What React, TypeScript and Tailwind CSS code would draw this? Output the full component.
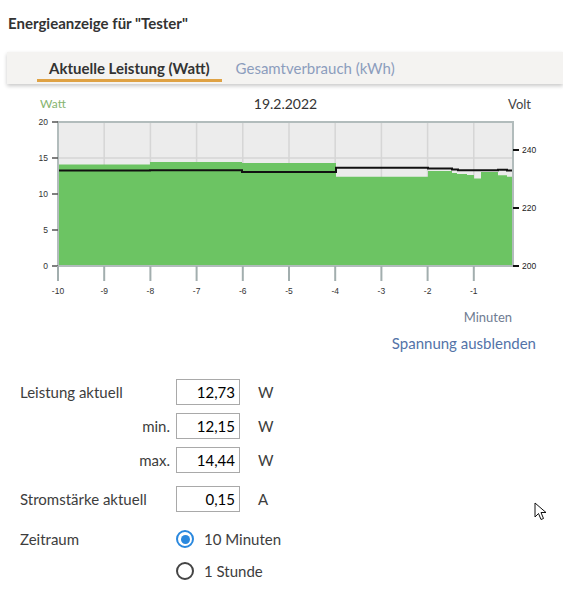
import React from 'react';

const FONT = "font-['Lato','Open_Sans',sans-serif]";

// minute ticks on the x axis, -10 .. -1
const minutes = [-10, -9, -8, -7, -6, -5, -4, -3, -2, -1];
const xOf = (m: number) => 58 + (m + 10) * 46.2;
const wattY = (w: number) => 265 - w * 7.2;
const voltY = (v: number) => 265 - (v - 200) * 2.9;

// power samples as [x, watt] steps
const power: [number, number][] = [
    [58, 14.1],
    [150, 14.44],
    [242, 14.3],
    [336, 12.4],
    [428, 13.2],
    [452, 12.9],
    [457, 12.78],
    [467, 12.65],
    [474, 12.15],
    [481, 13.06],
    [498, 12.6],
    [507, 12.4],
];

const voltage: [number, number][] = [
    [58, 232.9],
    [150, 233.0],
    [242, 232.4],
    [336, 233.9],
    [428, 233.6],
    [452, 233.3],
    [458, 233.0],
    [498, 233.2],
    [507, 232.9],
];

const stepPath = (pts: [number, number][], yOf: (v: number) => number, end: number) => {
    let d = '';
    pts.forEach(([x, v], i) => {
        const y = yOf(v).toFixed(1);
        d += i === 0 ? `M${x},${y}` : ` L${x},${yOf(pts[i - 1][1]).toFixed(1)} L${x},${y}`;
    });
    d += ` L${end},${yOf(pts[pts.length - 1][1]).toFixed(1)}`;
    return d;
};

const Chart = () => {
    const area = `${stepPath(power, wattY, 513)} L513,265 L58,265 Z`;
    const line = `${stepPath(voltage, voltY, 513)} L513,163`;
    return (
        <svg width={563} height={190} viewBox="0 112 563 190" className="block">
            <rect x={58} y={121} width={455} height={144} fill="#ececec" />
            {minutes.slice(1).map((m) => (
                <line key={m} x1={xOf(m)} y1={121} x2={xOf(m)} y2={265} stroke="#d6d6d6" strokeWidth={1.5} />
            ))}
            {[15, 10, 5].map((w) => (
                <line key={w} x1={58} y1={wattY(w)} x2={513} y2={wattY(w)} stroke="#d6d6d6" strokeWidth={1.5} />
            ))}
            <path d={area} fill="#6cc463" />
            <path d={line} fill="none" stroke="#111" strokeWidth={2} />
            <rect x={58} y={121} width={455} height={144} fill="none" stroke="#b2bcbc" strokeWidth={2} />

            {/* left axis: watt */}
            {[20, 15, 10, 5, 0].map((w) => (
                <g key={w}>
                    <line x1={52} y1={wattY(w)} x2={58} y2={wattY(w)} stroke="#555" strokeWidth={1.5} />
                    <text x={48} y={wattY(w) + 3} textAnchor="end" fontSize={8.5} fill="#333" fontFamily="Liberation Sans, sans-serif">
                        {w}
                    </text>
                </g>
            ))}

            {/* right axis: volt */}
            {[240, 220, 200].map((v) => (
                <g key={v}>
                    <line x1={513} y1={voltY(v)} x2={519} y2={voltY(v)} stroke="#111" strokeWidth={2} />
                    <text x={522} y={voltY(v) + 3} fontSize={8.5} fill="#222" fontFamily="Liberation Sans, sans-serif">
                        {v}
                    </text>
                </g>
            ))}

            {/* bottom axis: minutes */}
            {minutes.map((m) => (
                <g key={m}>
                    <line x1={xOf(m)} y1={265} x2={xOf(m)} y2={280} stroke="#a2aeae" strokeWidth={2} />
                    <text x={xOf(m)} y={293} textAnchor="middle" fontSize={8.5} fill="#333" fontFamily="Liberation Sans, sans-serif">
                        {m}
                    </text>
                </g>
            ))}
        </svg>
    );
};

const ValueBox = ({ value }: { value: string }) => (
    <div className="flex h-[26px] w-[64px] items-center justify-end border border-[#a9a9a9] bg-white pr-[4px] text-[15px] text-black">
        {value}
    </div>
);

const Radio = ({ checked, label }: { checked: boolean; label: string }) => (
    <div className="flex h-[26px] items-center gap-[10px]">
        {checked ? (
            <span className="grid h-[18px] w-[18px] place-items-center rounded-full border-2 border-[#2a88de]">
                <span className="h-[9px] w-[9px] rounded-full bg-[#2a88de]" />
            </span>
        ) : (
            <span className="h-[18px] w-[18px] rounded-full border-2 border-[#444]" />
        )}
        <span>{label}</span>
    </div>
);

const App = () => {
    return (
        <div className={`relative h-[595px] w-[563px] overflow-hidden bg-white text-[#3d3d3d] ${FONT}`}>
            <h1 className="pl-[8px] pt-[13px] text-[15px] font-bold leading-[20px] text-[#333]">Energieanzeige für "Tester"</h1>

            <div className="ml-[7px] mt-[19px] flex h-[32px] items-stretch bg-[#f4f3f1] pl-[30px] text-[15px] shadow-[0_2px_4px_rgba(0,0,0,0.22)]">
                <div className="relative flex items-center px-[12px] font-bold text-[#333]">
                    Aktuelle Leistung (Watt)
                    <span className="absolute bottom-[2px] left-0 right-0 h-[3px] bg-[#dfa244]" />
                </div>
                <div className="flex items-center pl-[14px] text-[#8c9dbd]">Gesamtverbrauch (kWh)</div>
            </div>

            <div className="mt-[11px] grid grid-cols-[1fr_auto_1fr] items-center text-[14px] leading-[18px]">
                <span className="pl-[40px] text-[12px] text-[#86b470]">Watt</span>
                <span className="pl-[8px] text-[#333]">19.2.2022</span>
                <span className="pr-[32px] text-right text-[13px] text-[#444]">Volt</span>
            </div>

            <Chart />

            <div className="mt-[6px] flex justify-end pr-[51px] text-[13px] leading-[16px] text-[#6f7c92]">Minuten</div>
            <div className="mt-[8px] flex justify-end pr-[27px] text-[15px] leading-[20px] text-[#5373a8]">Spannung ausblenden</div>

            <div className="mt-[26px] grid grid-cols-[150px_64px_auto] items-center gap-x-[6px] gap-y-[8px] pl-[20px] text-[15px]">
                <span>Leistung aktuell</span>
                <ValueBox value="12,73" />
                <span className="pl-[12px]">W</span>

                <span className="text-right">min.</span>
                <ValueBox value="12,15" />
                <span className="pl-[12px]">W</span>

                <span className="text-right">max.</span>
                <ValueBox value="14,44" />
                <span className="pl-[12px]">W</span>

                <span className="mt-[5px]">Stromstärke aktuell</span>
                <div className="mt-[5px]">
                    <ValueBox value="0,15" />
                </div>
                <span className="mt-[5px] pl-[12px]">A</span>

                <span className="mt-[6px] self-start leading-[26px]">Zeitraum</span>
                <div className="col-span-2 mt-[6px] flex flex-col gap-[6px]">
                    <Radio checked label="10 Minuten" />
                    <Radio checked={false} label="1 Stunde" />
                </div>
            </div>

            {/* mouse pointer */}
            <svg className="absolute left-[534px] top-[502px]" width={14} height={20} viewBox="0 0 14 20">
                <path d="M1,1 L1,15 L4.5,11.5 L7,17.5 L9.5,16.5 L7,10.5 L12,10.5 Z" fill="#fff" stroke="#111" strokeWidth={1} strokeLinejoin="round" />
            </svg>
        </div>
    );
};

export default App;
